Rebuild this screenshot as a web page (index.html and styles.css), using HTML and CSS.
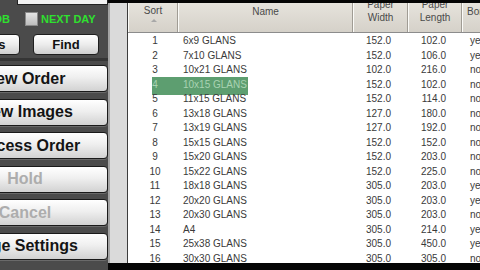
FILE: index.html
```html
<!DOCTYPE html>
<html lang="en">
<head>
  <meta charset="UTF-8" />
  <title>Print Station - Paper Sizes</title>
  <link rel="stylesheet" href="styles.css">
</head>
<body>
  <div class="side">
    <div class="side-in">
      <div class="search"></div>
      <div class="opts">
        <span class="opt-label">LOCAL DB</span>
        <span class="check"></span>
        <span class="opt-label">NEXT DAY</span>
      </div>
      <div class="small-row">
        <button class="small-btn wide">Reports</button>
        <button class="small-btn">Find</button>
      </div>
      <div class="big-list">
        <button class="big-btn">New Order</button>
        <button class="big-btn">View Images</button>
        <button class="big-btn">Process Order</button>
        <button class="big-btn off">Hold</button>
        <button class="big-btn off">Cancel</button>
        <button class="big-btn">Page Settings</button>
      </div>
    </div>
  </div>

  <div class="main">
    <div class="topbar"></div>
    <div class="mid">
      <div class="split"></div>
      <div class="grid">
        <div class="head">
          <div class="hcell sort">Sort<span class="arrow"></span></div>
          <div class="hcell name">Name</div>
          <div class="hcell two">Paper<br>Width</div>
          <div class="hcell two">Paper<br>Length</div>
          <div class="hcell bo">Borderless</div>
        </div>
        <div class="body" id="rows">
          <div class="mark"></div>
        </div>
      </div>
    </div>
    <div class="botbar"></div>
  </div>

  <script>
    const sizes = [
      [1, "6x9 GLANS", "152.0", "102.0", "yes"],
      [2, "7x10 GLANS", "152.0", "106.0", "yes"],
      [3, "10x21 GLANS", "102.0", "216.0", "no"],
      [4, "10x15 GLANS", "152.0", "102.0", "no"],
      [5, "11x15 GLANS", "152.0", "114.0", "no"],
      [6, "13x18 GLANS", "127.0", "180.0", "no"],
      [7, "13x19 GLANS", "127.0", "192.0", "no"],
      [8, "15x15 GLANS", "152.0", "152.0", "no"],
      [9, "15x20 GLANS", "152.0", "203.0", "no"],
      [10, "15x22 GLANS", "152.0", "225.0", "no"],
      [11, "18x18 GLANS", "305.0", "203.0", "yes"],
      [12, "20x20 GLANS", "305.0", "203.0", "yes"],
      [13, "20x30 GLANS", "305.0", "203.0", "no"],
      [14, "A4", "305.0", "214.0", "yes"],
      [15, "25x38 GLANS", "305.0", "450.0", "yes"],
      [16, "30x30 GLANS", "305.0", "305.0", "no"]
    ];
    const rows = document.getElementById("rows");
    sizes.forEach(s => {
      const row = document.createElement("div");
      row.className = s[0] === 4 ? "row sel" : "row";
      row.innerHTML = `
        <span class="c-sort">${s[0]}</span>
        <span class="c-name">${s[1]}</span>
        <span class="c-num">${s[2]}</span>
        <span class="c-num len">${s[3]}</span>
        <span class="c-bo">${s[4]}</span>`;
      rows.appendChild(row);
    });
  </script>
</body>
</html>
```

FILE: styles.css
```css
body {
  margin: 0; width: 480px; height: 270px; overflow: hidden;
  display: flex; background: #000;
  font-family: "Liberation Sans", Arial, sans-serif;
}

/* left control panel */
.side { width: 108px; height: 270px; overflow: hidden; background: #4b4b4b; }
.side-in { margin-left: -58px; width: 166px; }
.search {
  margin-left: 75px; height: 4px; background: #f2f2f2;
  border: 1px solid #222; border-top: none;
}
.opts {
  display: flex; align-items: center; height: 17px; margin-top: 5px;
  color: #2fe02f; font-size: 11px; font-weight: bold;
}
.opts .opt-label:first-child { width: 68px; text-align: right; }
.check {
  width: 11px; height: 12px; margin: 0 3px 0 15px;
  background: linear-gradient(#e4e4e4, #bdbdbd); border: 1px solid #8a8a8a;
}
.small-row { display: flex; gap: 13px; margin-top: 7px; }
.small-btn {
  width: 66px; height: 21px; padding: 0;
  font: bold 13px "Liberation Sans", Arial, sans-serif; color: #111;
  background: linear-gradient(#ffffff, #ececec 50%, #cfcfcf);
  border: 1px solid #1e1e1e; border-radius: 4px;
}
.small-btn.wide { width: 78px; }
.big-list {
  margin-top: 3px; padding-top: 4px; border-top: 3px solid #353535;
  display: flex; flex-direction: column; gap: 6.5px;
}
.big-btn {
  width: 166px; height: 27px; padding: 0;
  font: bold 16px "Liberation Sans", Arial, sans-serif; color: #141414;
  background: linear-gradient(#ffffff, #efefef 45%, #d2d2d2);
  border: 1px solid #1a1a1a; border-radius: 4px;
  box-shadow: 0 1px 0 #6a6a6a;
}
.big-btn.off { color: #adadad; }

/* table area */
.main { flex: 1; display: flex; flex-direction: column; }
.topbar { height: 3px; background: #050505; flex: none; }
.botbar { height: 7px; background: #050505; flex: none; }
.mid { flex: 1; display: flex; min-height: 0; }
.split {
  width: 17px; background: #dadada;
  border-left: 2px solid #a4a4a4; border-right: 1px solid #3c3c3c;
}
.grid { flex: 1; background: #fff; display: flex; flex-direction: column; overflow: hidden; }

.head {
  flex: none;
  display: grid; grid-template-columns: 50px 175px 55px 54px 1fr;
  height: 29px; border-bottom: 1px solid #8c8c8c;
  background: linear-gradient(#e6e3dc, #d5d1c9);
  color: #4a4a4a; font-size: 10px;
}
.hcell {
  position: relative; text-align: center; overflow: hidden; white-space: nowrap;
  border-left: 1px solid #fbfbf8; border-right: 1px solid #a09c94;
}
.hcell.sort { padding-top: 2px; }
.hcell.name { padding-top: 3px; }
.hcell.two { line-height: 13px; margin-top: -5px; }
.hcell.bo { text-align: left; padding-left: 4px; padding-top: 3px; border-right: none; }
.arrow {
  position: absolute; left: 22px; top: 16px;
  border-left: 3px solid transparent; border-right: 3px solid transparent;
  border-bottom: 3px solid #a8a8a8;
}

.body { position: relative; flex: 1; z-index: 0; }
.row {
  display: grid; grid-template-columns: 50px 175px 55px 54px 1fr;
  height: 14.5px; line-height: 14.5px; font-size: 10px; color: #3a3a3a;
  white-space: nowrap;
}
.mark + .row { margin-top: 1px; }
.c-sort { text-align: center; padding-left: 4px; }
.c-name { padding-left: 5px; }
.c-num { text-align: right; padding-right: 17px; }
.c-num.len { padding-right: 16px; }
.c-bo { padding-left: 8px; overflow: hidden; }
.row.sel .c-sort, .row.sel .c-name { color: #a9d3b2; }
.mark {
  position: absolute; left: 24px; top: 44px; width: 96px; height: 18px;
  background: #5d9e70; z-index: -1;
}
```
